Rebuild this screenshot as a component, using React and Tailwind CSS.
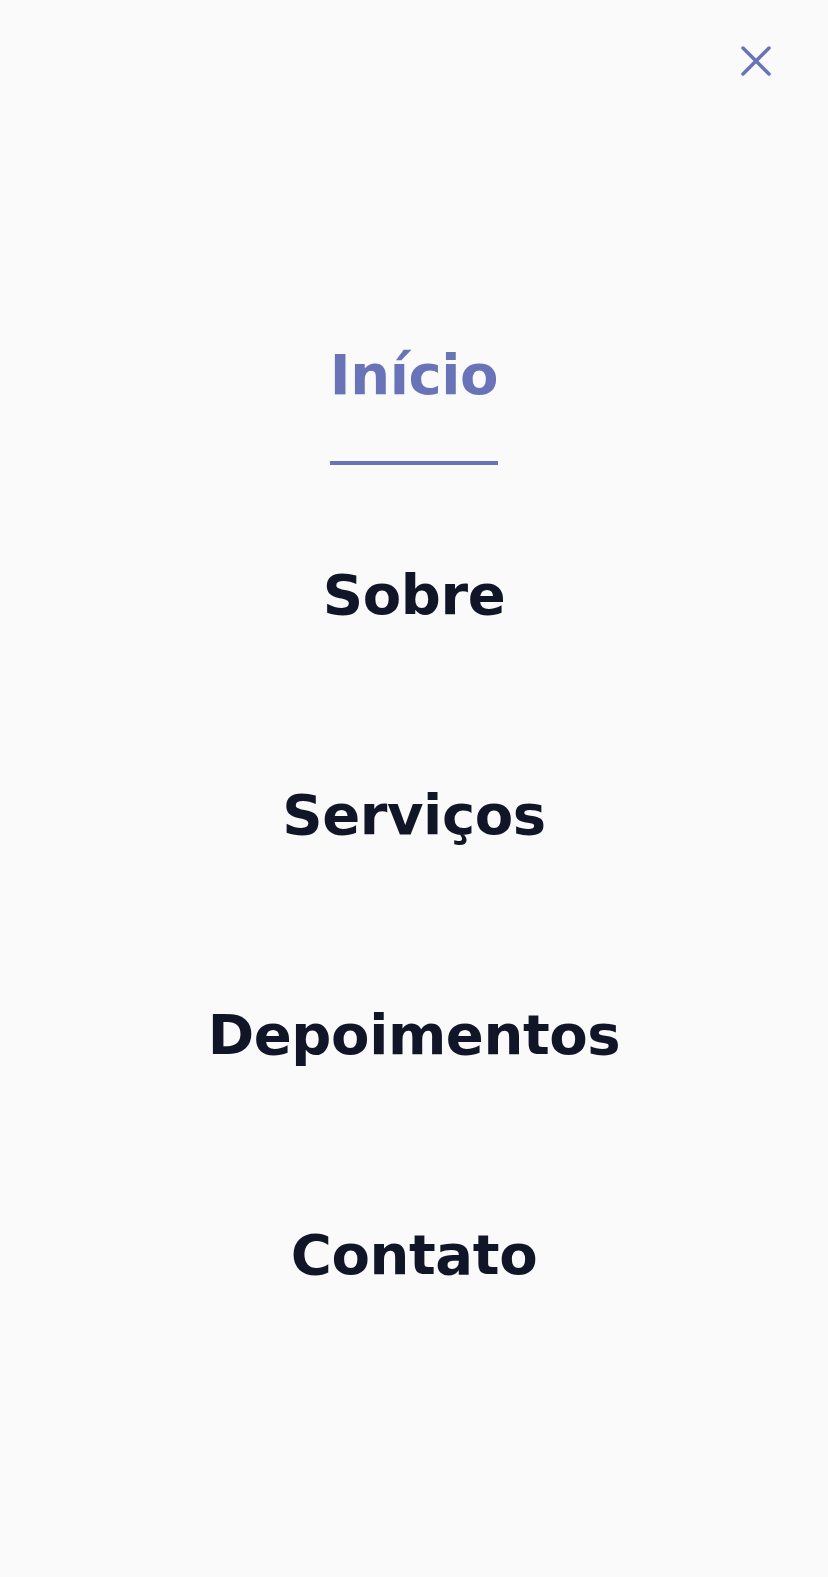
const links = ["Início", "Sobre", "Serviços", "Depoimentos", "Contato"];

const CloseIcon = () => (
  <svg width="32" height="32" viewBox="0 0 32 32" fill="none">
    <path
      d="M3 3 L29 29 M29 3 L3 29"
      stroke="#6974b8"
      strokeWidth="3.5"
      strokeLinecap="round"
    />
  </svg>
);

const App = () => {
  const active = "Início";

  return (
    <div
      className="min-h-[1577px] bg-[#fafafa]"
      style={{ fontFamily: '"DejaVu Sans", sans-serif' }}
    >
      <header className="flex justify-end pt-[45px] pr-[56px]">
        <button className="cursor-pointer">
          <CloseIcon />
        </button>
      </header>
      <nav className="pt-[215px]">
        <ul className="flex flex-col">
          {links.map((link) => (
            <li key={link} className="h-[220px] flex items-center justify-center">
              <a
                href="#"
                className={
                  "flex flex-col items-center gap-[50px] text-[56px] leading-[72px] font-bold tracking-[-0.4px] " +
                  (link === active ? "text-[#6974b8]" : "text-[#111528]")
                }
              >
                <span>{link}</span>
                <span
                  className={
                    "h-[4px] w-full " +
                    (link === active ? "bg-[#6974b8]" : "bg-transparent")
                  }
                />
              </a>
            </li>
          ))}
        </ul>
      </nav>
    </div>
  );
};

export default App;
